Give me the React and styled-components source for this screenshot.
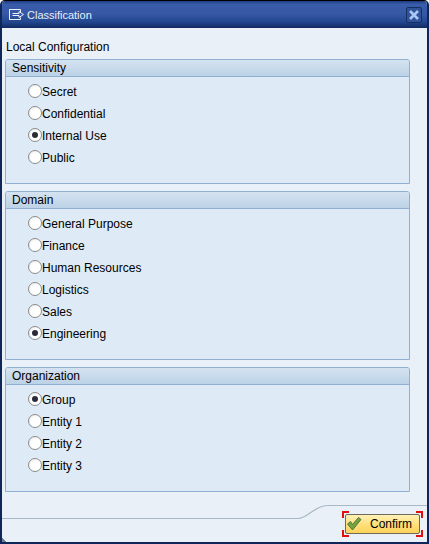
import React from "react";
import styled, { createGlobalStyle } from "styled-components";

const Global = createGlobalStyle`
  html, body { margin: 0; padding: 0; background: #fff; }
  #root { width: 429px; height: 544px; }
`;
const Win = styled.div`
  position: relative;
  box-sizing: border-box;
  width: 429px;
  height: 544px;
  display: flex;
  flex-direction: column;
  background: #e9f0f8;
  border: 1px solid #000;
  border-left: 2px solid #0e2658;
  border-right: 2px solid #0e2658;
  border-bottom: 2px solid #0e2658;
  border-top-left-radius: 5px;
  border-top-right-radius: 5px;
  overflow: hidden;
  font-family: "Liberation Sans", sans-serif;
  font-size: 12px;
  color: #000;
`;
const Title = styled.div`
  flex: none;
  height: 27px;
  display: flex;
  align-items: center;
  padding: 1px 5px 0 5px;
  box-sizing: border-box;
  gap: 2px;
  color: #e6effa;
  font-size: 11px;
  background: linear-gradient(#1d3a7e 0%, #3a5dab 12%, #3557a4 50%, #23468f 78%, #12295f 100%);
`;
const TitleText = styled.span`
  flex: 1;
`;
const Close = styled.div`
  width: 16px;
  height: 16px;
  box-sizing: border-box;
  border: 1px solid #15305f;
  border-radius: 2px;
  background: #2f5298;
  display: flex;
  align-items: center;
  justify-content: center;
`;
const Body = styled.div`
  flex: 1;
  display: flex;
  flex-direction: column;
  padding: 0 17px 0 3px;
  gap: 7px;
`;
const Heading = styled.div`
  height: 31px;
  margin-bottom: -7px;
  display: flex;
  align-items: flex-end;
  padding: 0 0 5px 1px;
  box-sizing: border-box;
`;
const Panel = styled.section`
  box-sizing: border-box;
  height: ${p => p.$h}px;
  background: #deeaf5;
  border: 1px solid #8fb0d0;
  border-top-left-radius: 3px;
  border-top-right-radius: 3px;
`;
const PanelHead = styled.div`
  height: 17px;
  line-height: 16px;
  box-sizing: border-box;
  padding-left: 6px;
  background: linear-gradient(#d5e3f1, #bcd2e6);
  border-bottom: 1px solid #8fb0d0;
  border-radius: 2px 2px 0 0;
`;
const Rows = styled.div`
  padding: 4px 0 0 22px;
`;
const Row = styled.div`
  height: 22px;
  display: flex;
  align-items: center;
`;
const Radio = styled.span`
  flex: none;
  box-sizing: border-box;
  width: 14px;
  height: 14px;
  margin-bottom: 2px;
  border-radius: 50%;
  border: 1px solid #8c8c8c;
  background: radial-gradient(circle at 60% 60%, #ffffff 45%, #e4e4e4 100%);
  display: flex;
  align-items: center;
  justify-content: center;
  &::after {
    content: "";
    display: ${p => (p.$on ? "block" : "none")};
    width: 6px;
    height: 6px;
    border-radius: 50%;
    background: #2b2b3a;
  }
`;
const Footer = styled.div`
  position: relative;
  flex: none;
  height: 50px;
  display: flex;
  justify-content: flex-end;
  align-items: flex-start;
  padding: 22px 7px 0 0;
  box-sizing: border-box;
`;
const Curve = styled.svg`
  position: absolute;
  left: 0;
  top: 0;
`;
const Grip = styled.i`
  position: absolute;
  left: 0;
  bottom: 0;
  width: 4px;
  height: 4px;
  background: linear-gradient(45deg, #6b7c92 50%, transparent 50%);
`;
const ConfirmWrap = styled.div`
  position: relative;
  width: 75px;
  height: 20px;
`;
const Confirm = styled.button`
  width: 100%;
  height: 100%;
  box-sizing: border-box;
  padding: 0 9px 0 24px;
  border: 1px solid #6f6a58;
  border-radius: 2px;
  background: linear-gradient(#fff2b8 0%, #ffe07c 50%, #fdd35a 100%);
  font-family: inherit;
  font-size: 12px;
  color: #000;
  text-align: center;
`;
const Check = styled.svg`
  position: absolute;
  left: 1px;
  top: 1px;
`;
const Corner = styled.i`
  position: absolute;
  width: 5px;
  height: 5px;
  ${p => (p.$t ? "top: -3px;" : "bottom: -3px;")}
  ${p => (p.$l ? "left: -3px;" : "right: -3px;")}
  ${p => (p.$t ? "border-top" : "border-bottom")}: 2px solid #e01010;
  ${p => (p.$l ? "border-left" : "border-right")}: 2px solid #e01010;
`;

const groups = [
  { t: "Sensitivity", h: 125, on: "Internal Use", o: ["Secret", "Confidential", "Internal Use", "Public"] },
  { t: "Domain", h: 169, on: "Engineering", o: ["General Purpose", "Finance", "Human Resources", "Logistics", "Sales", "Engineering"] },
  { t: "Organization", h: 125, on: "Group", o: ["Group", "Entity 1", "Entity 2", "Entity 3"] },
];

export default function App() {
  return (
    <>
      <Global />
      <Win>
        <Title>
          <svg width="18" height="14" viewBox="0 0 18 14" fill="none" stroke="#eaf1fb" strokeWidth="1">
            <path d="M2.5 1.5H13.5V4M2.5 1.5V11.5H13.5V9.5M2.5 1.5V11.5" />
            <path d="M5.5 5.5H12V3.5L16.5 6.5L12 9.5V7.5H5.5" />
          </svg>
          <TitleText>Classification</TitleText>
          <Close>
            <svg width="12" height="12" viewBox="0 0 12 12" stroke="#a9c8f5" strokeWidth="2.6">
              <path d="M2 2L10 10M10 2L2 10" />
            </svg>
          </Close>
        </Title>
        <Body>
          <Heading>Local Configuration</Heading>
          {groups.map(g => (
            <Panel key={g.t} $h={g.h}>
              <PanelHead>{g.t}</PanelHead>
              <Rows>
                {g.o.map(x => (
                  <Row key={x}>
                    <Radio $on={x === g.on} />
                    {x}
                  </Row>
                ))}
              </Rows>
            </Panel>
          ))}
        </Body>
        <Footer>
          <Curve width="425" height="50" fill="none" stroke="#a9b8c8">
            <path strokeWidth="1.2" d="M0 26.5H296C306 26.5 312 13.5 326 13.5H425" />
          </Curve>
          <Grip />
          <ConfirmWrap>
            <Corner $t $l /><Corner $t /><Corner $l /><Corner />
            <Confirm>Confirm</Confirm>
            <Check width="16" height="17" viewBox="0 0 16 17">
              <path d="M1.5 9L4.5 6.5L6.5 9.5L12.5 2.5L15 4.5L6.5 15Z" fill="#6fa83a" stroke="#5b6f4a" strokeWidth="1" />
            </Check>
          </ConfirmWrap>
        </Footer>
      </Win>
    </>
  );
}
